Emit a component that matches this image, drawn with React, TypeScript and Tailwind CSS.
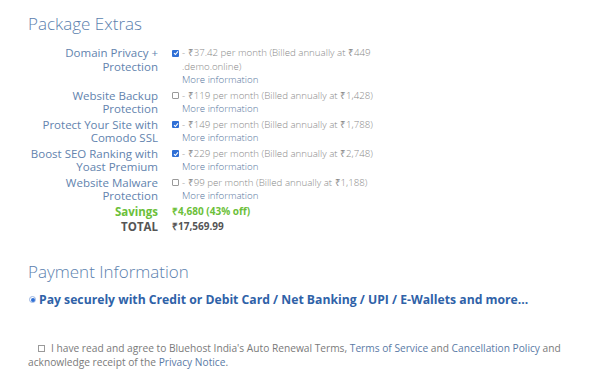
import React from "react";

const Check = ({ checked }: { checked: boolean }) =>
  checked ? (
    <span className="inline-flex items-center justify-center w-[7px] h-[7px] rounded-[1px] bg-[#2f6fd6] mr-[3px] align-[0px]">
      <svg width="6" height="6" viewBox="0 0 6 6">
        <path d="M1 3.2 L2.4 4.5 L5 1.4" stroke="white" strokeWidth="1.1" fill="none" />
      </svg>
    </span>
  ) : (
    <span className="inline-block w-[7px] h-[7px] rounded-[1px] border border-[#9a9a9a] bg-white mr-[3px] align-[0px]" />
  );

type Row = { label: string[]; checked: boolean; value: string[] };

const rows: Row[] = [
  {
    label: ["Domain Privacy +", "Protection"],
    checked: true,
    value: ["- ₹37.42 per month (Billed annually at ₹449", ".demo.online)"],
  },
  {
    label: ["Website Backup", "Protection"],
    checked: false,
    value: ["- ₹119 per month (Billed annually at ₹1,428)"],
  },
  {
    label: ["Protect Your Site with", "Comodo SSL"],
    checked: true,
    value: ["- ₹149 per month (Billed annually at ₹1,788)"],
  },
  {
    label: ["Boost SEO Ranking with", "Yoast Premium"],
    checked: true,
    value: ["- ₹229 per month (Billed annually at ₹2,748)"],
  },
  {
    label: ["Website Malware", "Protection"],
    checked: false,
    value: ["- ₹99 per month (Billed annually at ₹1,188)"],
  },
];

export default function App() {
  return (
    <div
      className="w-[600px] h-[383px] bg-white overflow-hidden pl-[28px] pt-[12px]"
      style={{ fontFamily: '"Open Sans", sans-serif' }}
    >
      <h2 className="text-[17px] font-light leading-[24px] text-[#5b7fae]">Package Extras</h2>
      <div className="grid grid-cols-[130px_1fr] gap-x-[14px] mt-[9px] text-[11.5px] leading-[13.5px]">
        {rows.map((r, i) => (
          <React.Fragment key={i}>
            <div className="text-right text-[#6283ae] py-[1px]">
              {r.label.map((l, j) => (
                <div key={j}>{l}</div>
              ))}
            </div>
            <div className="py-[1px] text-[9.7px] font-light text-[#8a8a8a]">
              {r.value.map((v, j) => (
                <div key={j} className={j > 0 ? "pl-[10px]" : ""}>
                  {j === 0 && <Check checked={r.checked} />}
                  {v}
                </div>
              ))}
              <div className="pl-[10px] text-[#5877a0]">More information</div>
            </div>
          </React.Fragment>
        ))}
        <div className="text-right font-bold text-[#6cbf3a] py-[1px]">Savings</div>
        <div className="font-bold text-[10px] text-[#6cbf3a] py-[1px]">₹4,680 (43% off)</div>
        <div className="text-right font-bold text-[#555555] py-[1px]">TOTAL</div>
        <div className="font-bold text-[10px] text-[#555555] py-[1px]">₹17,569.99</div>
      </div>

      <h2 className="text-[17px] font-light leading-[24px] text-[#5b7fae] mt-[25px]">Payment Information</h2>
      <div className="flex items-center mt-[8px] ml-[1px]">
        <span className="inline-flex items-center justify-center w-[7px] h-[7px] rounded-full border border-[#9ab4e0] bg-white mr-[3px]">
          <span className="w-[4px] h-[4px] rounded-full bg-[#2f6fd6]" />
        </span>
        <span className="text-[12.2px] font-bold text-[#2f62a8] leading-[16px]">
          Pay securely with Credit or Debit Card / Net Banking / UPI / E-Wallets and more...
        </span>
      </div>

      <div className="mt-[33px] text-[10.2px] leading-[14px] text-[#7a7a7a] pr-[30px]">
        <span className="inline-block w-[7px] h-[7px] border border-[#9a9a9a] bg-white ml-[10px] mr-[6px] align-[0px]" />
        I have read and agree to Bluehost India's Auto Renewal Terms,{" "}
        <span className="text-[#5a7aa6]">Terms of Service</span> and{" "}
        <span className="text-[#5a7aa6]">Cancellation Policy</span> and acknowledge receipt of the{" "}
        <span className="text-[#5a7aa6]">Privacy Notice</span>.
      </div>
    </div>
  );
}
